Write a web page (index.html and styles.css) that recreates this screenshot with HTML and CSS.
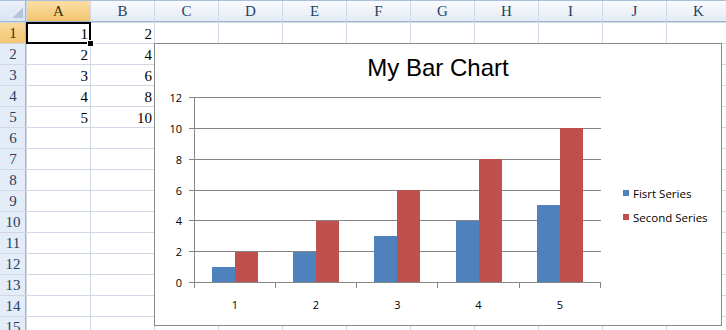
FILE: index.html
```html
<!DOCTYPE html>
<html>
<head>
  <title>Book1 - Bar Chart</title>
  <link rel="stylesheet" href="styles.css">
</head>
<body>
<div class="sheet">
  <div class="corner"><span class="select-all"></span></div>
  <div class="col-head selected">A</div>
  <div class="col-head">B</div>
  <div class="col-head">C</div>
  <div class="col-head">D</div>
  <div class="col-head">E</div>
  <div class="col-head">F</div>
  <div class="col-head">G</div>
  <div class="col-head">H</div>
  <div class="col-head">I</div>
  <div class="col-head">J</div>
  <div class="col-head">K</div>

  <div class="row-head selected">1</div>
  <div class="cell num active">1</div><div class="cell num">2</div>
  <div class="cell"></div><div class="cell"></div><div class="cell"></div><div class="cell"></div><div class="cell"></div><div class="cell"></div><div class="cell"></div><div class="cell"></div><div class="cell"></div>

  <div class="row-head">2</div>
  <div class="cell num">2</div><div class="cell num">4</div>
  <div class="cell"></div><div class="cell"></div><div class="cell"></div><div class="cell"></div><div class="cell"></div><div class="cell"></div><div class="cell"></div><div class="cell"></div><div class="cell"></div>

  <div class="row-head">3</div>
  <div class="cell num">3</div><div class="cell num">6</div>
  <div class="cell"></div><div class="cell"></div><div class="cell"></div><div class="cell"></div><div class="cell"></div><div class="cell"></div><div class="cell"></div><div class="cell"></div><div class="cell"></div>

  <div class="row-head">4</div>
  <div class="cell num">4</div><div class="cell num">8</div>
  <div class="cell"></div><div class="cell"></div><div class="cell"></div><div class="cell"></div><div class="cell"></div><div class="cell"></div><div class="cell"></div><div class="cell"></div><div class="cell"></div>

  <div class="row-head">5</div>
  <div class="cell num">5</div><div class="cell num">10</div>
  <div class="cell"></div><div class="cell"></div><div class="cell"></div><div class="cell"></div><div class="cell"></div><div class="cell"></div><div class="cell"></div><div class="cell"></div><div class="cell"></div>

  <div class="row-head">6</div>
  <div class="cell"></div><div class="cell"></div><div class="cell"></div><div class="cell"></div><div class="cell"></div><div class="cell"></div><div class="cell"></div><div class="cell"></div><div class="cell"></div><div class="cell"></div><div class="cell"></div>

  <div class="row-head">7</div>
  <div class="cell"></div><div class="cell"></div><div class="cell"></div><div class="cell"></div><div class="cell"></div><div class="cell"></div><div class="cell"></div><div class="cell"></div><div class="cell"></div><div class="cell"></div><div class="cell"></div>

  <div class="row-head">8</div>
  <div class="cell"></div><div class="cell"></div><div class="cell"></div><div class="cell"></div><div class="cell"></div><div class="cell"></div><div class="cell"></div><div class="cell"></div><div class="cell"></div><div class="cell"></div><div class="cell"></div>

  <div class="row-head">9</div>
  <div class="cell"></div><div class="cell"></div><div class="cell"></div><div class="cell"></div><div class="cell"></div><div class="cell"></div><div class="cell"></div><div class="cell"></div><div class="cell"></div><div class="cell"></div><div class="cell"></div>

  <div class="row-head">10</div>
  <div class="cell"></div><div class="cell"></div><div class="cell"></div><div class="cell"></div><div class="cell"></div><div class="cell"></div><div class="cell"></div><div class="cell"></div><div class="cell"></div><div class="cell"></div><div class="cell"></div>

  <div class="row-head">11</div>
  <div class="cell"></div><div class="cell"></div><div class="cell"></div><div class="cell"></div><div class="cell"></div><div class="cell"></div><div class="cell"></div><div class="cell"></div><div class="cell"></div><div class="cell"></div><div class="cell"></div>

  <div class="row-head">12</div>
  <div class="cell"></div><div class="cell"></div><div class="cell"></div><div class="cell"></div><div class="cell"></div><div class="cell"></div><div class="cell"></div><div class="cell"></div><div class="cell"></div><div class="cell"></div><div class="cell"></div>

  <div class="row-head">13</div>
  <div class="cell"></div><div class="cell"></div><div class="cell"></div><div class="cell"></div><div class="cell"></div><div class="cell"></div><div class="cell"></div><div class="cell"></div><div class="cell"></div><div class="cell"></div><div class="cell"></div>

  <div class="row-head">14</div>
  <div class="cell"></div><div class="cell"></div><div class="cell"></div><div class="cell"></div><div class="cell"></div><div class="cell"></div><div class="cell"></div><div class="cell"></div><div class="cell"></div><div class="cell"></div><div class="cell"></div>

  <div class="row-head">15</div>
  <div class="cell"></div><div class="cell"></div><div class="cell"></div><div class="cell"></div><div class="cell"></div><div class="cell"></div><div class="cell"></div><div class="cell"></div><div class="cell"></div><div class="cell"></div><div class="cell"></div>
</div>

<!-- embedded chart floating over the cells -->
<div class="chart">
  <h2 class="chart-title">My Bar Chart</h2>
  <div class="chart-body">
    <svg class="plot" width="468" height="243">
      <g class="grid">
        <line x1="34" y1="15.5" x2="446" y2="15.5"/>
        <line x1="34" y1="46.5" x2="446" y2="46.5"/>
        <line x1="34" y1="77.5" x2="446" y2="77.5"/>
        <line x1="34" y1="108.5" x2="446" y2="108.5"/>
        <line x1="34" y1="138.5" x2="446" y2="138.5"/>
        <line x1="34" y1="169.5" x2="446" y2="169.5"/>
      </g>
      <g class="bars-first">
        <rect x="57" y="185" width="23" height="15"/>
        <rect x="138" y="170" width="23" height="30"/>
        <rect x="219" y="154" width="23" height="46"/>
        <rect x="301" y="139" width="23" height="61"/>
        <rect x="382" y="123" width="23" height="77"/>
      </g>
      <g class="bars-second">
        <rect x="80" y="170" width="23" height="30"/>
        <rect x="161" y="139" width="23" height="61"/>
        <rect x="242" y="108" width="23" height="92"/>
        <rect x="324" y="77" width="23" height="123"/>
        <rect x="405" y="46" width="23" height="154"/>
      </g>
      <g class="axis">
        <line x1="39.5" y1="15" x2="39.5" y2="201"/>
        <line x1="34" y1="200.5" x2="446" y2="200.5"/>
        <line x1="39.5" y1="200" x2="39.5" y2="206"/>
        <line x1="120.5" y1="200" x2="120.5" y2="206"/>
        <line x1="201.5" y1="200" x2="201.5" y2="206"/>
        <line x1="282.5" y1="200" x2="282.5" y2="206"/>
        <line x1="364.5" y1="200" x2="364.5" y2="206"/>
        <line x1="445.5" y1="200" x2="445.5" y2="206"/>
      </g>
      <g class="y-labels">
        <text x="27" y="19.5">12</text>
        <text x="27" y="50.5">10</text>
        <text x="27" y="81.5">8</text>
        <text x="27" y="112.5">6</text>
        <text x="27" y="142.5">4</text>
        <text x="27" y="173.5">2</text>
        <text x="27" y="204.5">0</text>
      </g>
      <g class="x-labels">
        <text x="80" y="227">1</text>
        <text x="161" y="227">2</text>
        <text x="242.5" y="227">3</text>
        <text x="323.5" y="227">4</text>
        <text x="405" y="227">5</text>
      </g>
    </svg>
    <ul class="legend">
      <li><span class="swatch first"></span>Fisrt Series</li>
      <li><span class="swatch second"></span>Second Series</li>
    </ul>
  </div>
</div>
</body>
</html>
```

FILE: styles.css
```css
body {
  margin: 0;
  overflow: hidden;
  background: #fff;
}

.sheet {
  display: grid;
  grid-template-columns: 26px repeat(11, 63px);
  grid-template-rows: 21px;
  grid-auto-rows: 20px;
  gap: 1px;
  background: #d0d7e5;
  border-top: 1px solid #a9c0dc;
  font-family: "Liberation Serif", serif;
  font-size: 15px;
  color: #000;
}

.corner {
  display: flex;
  justify-content: flex-end;
  align-items: flex-end;
  padding: 0 3px 4px 0;
  background: linear-gradient(#e9eff8, #dae4f1);
  box-shadow: inset 0 -1px #9eb6ce, inset -1px 0 #9eb6ce;
}

.select-all {
  width: 10px;
  height: 10px;
  background: linear-gradient(135deg, transparent 50%, #b4c5dc 50%);
}

.col-head {
  display: flex;
  align-items: center;
  justify-content: center;
  background: linear-gradient(#f9fbfd, #e3eaf4);
  box-shadow: inset 0 -1px #9eb6ce;
  color: #27415f;
}

.row-head {
  display: flex;
  align-items: center;
  justify-content: center;
  background: #e4ecf7;
  box-shadow: inset -1px 0 #9eb6ce;
  color: #27415f;
}

.col-head.selected {
  background: linear-gradient(#fbdea6, #f2c46b);
  color: #3c2c0c;
}

.row-head.selected {
  background: linear-gradient(#f9d99c, #f3c672);
  color: #3c2c0c;
}

.cell {
  background: #fff;
  box-sizing: border-box;
  padding: 2px 2px 0 0;
  line-height: 18px;
}

.num {
  text-align: right;
}

.active {
  position: relative;
  z-index: 1;
  outline: 2px solid #000;
  outline-offset: -1px;
}

.active::after {
  content: "";
  position: absolute;
  right: -4px;
  bottom: -4px;
  width: 5px;
  height: 5px;
  background: #000;
  border: 1px solid #fff;
}

.chart {
  position: absolute;
  left: 154px;
  top: 43px;
  width: 568px;
  height: 283px;
  box-sizing: border-box;
  border: 1px solid #8a8a8a;
  background: #fff;
  z-index: 2;
}

.chart-title {
  margin: 0;
  padding-top: 10px;
  font-family: "Liberation Sans", Arial, sans-serif;
  font-size: 24px;
  font-weight: normal;
  line-height: 28px;
  text-align: center;
  color: #000;
}

.chart-body {
  display: flex;
}

.plot {
  display: block;
  flex: none;
}

.plot line {
  stroke: #868686;
  stroke-width: 1;
}

.bars-first rect {
  fill: #4f81bd;
}

.bars-second rect {
  fill: #c0504d;
}

.plot text {
  font-family: "Open Sans", sans-serif;
  font-size: 11px;
  fill: #000;
}

.y-labels text {
  text-anchor: end;
}

.x-labels text {
  text-anchor: middle;
}

.legend {
  list-style: none;
  margin: 0;
  padding: 99px 0 0 0;
  font-family: "Open Sans", sans-serif;
  font-size: 11.5px;
  color: #000;
}

.legend li {
  display: flex;
  align-items: center;
  gap: 4px;
  height: 24px;
  white-space: nowrap;
}

.swatch {
  width: 6px;
  height: 6px;
}

.swatch.first {
  background: #4f81bd;
}

.swatch.second {
  background: #c0504d;
}
```
